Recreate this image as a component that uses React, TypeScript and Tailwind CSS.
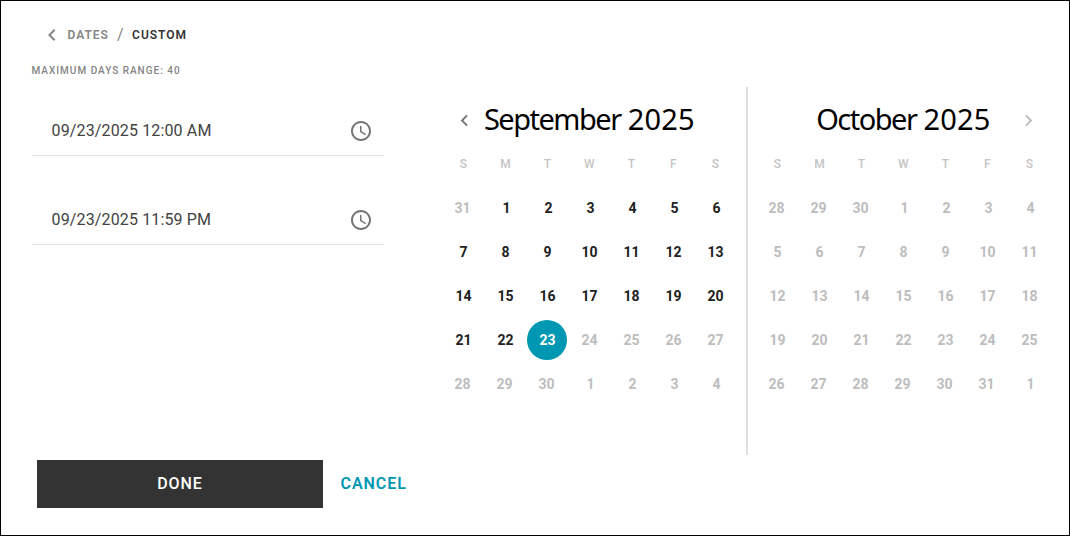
import clsx from "clsx"

const WEEKDAYS = ["S", "M", "T", "W", "T", "F", "S"]

const SEPTEMBER = [
  [31, 1, 2, 3, 4, 5, 6],
  [7, 8, 9, 10, 11, 12, 13],
  [14, 15, 16, 17, 18, 19, 20],
  [21, 22, 23, 24, 25, 26, 27],
  [28, 29, 30, 1, 2, 3, 4],
]

const OCTOBER = [
  [28, 29, 30, 1, 2, 3, 4],
  [5, 6, 7, 8, 9, 10, 11],
  [12, 13, 14, 15, 16, 17, 18],
  [19, 20, 21, 22, 23, 24, 25],
  [26, 27, 28, 29, 30, 31, 1],
]

function Chevron({ right, className }: { right?: boolean; className?: string }) {
  return (
    <svg viewBox="0 0 24 24" fill="currentColor" className={className}>
      {right ? (
        <path d="M10 6L8.59 7.41 13.17 12l-4.58 4.59L10 18l6-6z" />
      ) : (
        <path d="M15.41 7.41L14 6l-6 6 6 6 1.41-1.41L10.83 12z" />
      )}
    </svg>
  )
}

function ClockIcon() {
  return (
    <svg viewBox="0 0 24 24" fill="currentColor" className="w-6 h-6 text-[#757575]">
      <path d="M11.99 2C6.47 2 2 6.48 2 12s4.47 10 9.99 10C17.52 22 22 17.52 22 12S17.52 2 11.99 2zM12 20c-4.42 0-8-3.58-8-8s3.58-8 8-8 8 3.58 8 8-3.58 8-8 8z" />
      <path d="M12.5 7H11v6l5.25 3.15.75-1.23-4.5-2.67z" />
    </svg>
  )
}

function DateField({ value }: { value: string }) {
  return (
    <div className="flex h-[50px] w-[352px] items-center justify-between border-b border-[#e0e0e0] pl-[19.5px] pr-[11px]">
      <span className="text-base tracking-[0.14px] text-[#424242]">{value}</span>
      <button type="button" aria-label="Pick time">
        <ClockIcon />
      </button>
    </div>
  )
}

type MonthProps = {
  month: string
  year: number
  weeks: number[][]
  lastActive: number
  selected?: number
  nav: "prev" | "next"
}

function Month({ month, year, weeks, lastActive, selected, nav }: MonthProps) {
  return (
    <div className="w-[294px]">
      <div className="flex h-[66px] items-center">
        <button type="button" aria-label="Previous month" className="w-[42px] text-[#757575]">
          {nav === "prev" && <Chevron className="ml-[11px] w-[23px] h-[23px]" />}
        </button>
        <h2 className="flex-1 whitespace-nowrap pb-1 text-center font-['Noto_Sans'] text-[29px] leading-none tracking-[-1.5px] text-black">
          {month} <span className="ml-[1px] tracking-[0.2px]">{year}</span>
        </h2>
        <button type="button" aria-label="Next month" className="w-[42px] text-[#bdbdbd]">
          {nav === "next" && <Chevron right className="ml-[9px] w-[23px] h-[23px]" />}
        </button>
      </div>
      <div className="grid h-[33px] grid-cols-7">
        {WEEKDAYS.map((day, i) => (
          <span key={i} className="text-center text-xs font-medium leading-[22px] text-[#c4c4c4]">
            {day}
          </span>
        ))}
      </div>
      {weeks.map((week, row) => {
        // rows shared with a neighbouring month spread one- and two-digit days apart
        const shared = week[0] > week[6]
        return (
          <div key={row} className="grid h-11 grid-cols-7 place-items-center">
            {week.map((day, col) => {
              const outside = (row === 0 && day > 20) || (row === 4 && day < 10)
              const active = !outside && day <= lastActive
              return (
                <button
                  key={col}
                  type="button"
                  className={clsx(
                    "h-10 w-10 rounded-full text-[14px] leading-5 font-bold tracking-[-0.2px]",
                    shared && (day < 10 ? "pl-[2px]" : "pr-[2px]"),
                    day === selected ? "bg-[#0097b2] text-white" : active ? "text-[#212121]" : "text-[#bdbdbd]",
                  )}
                >
                  {day}
                </button>
              )
            })}
          </div>
        )
      })}
    </div>
  )
}

export default function App() {
  return (
    <div className="flex h-[536px] w-[1070px] flex-col border border-black bg-white font-[Roboto,sans-serif]">
      <div className="flex h-[454px]">
        <div className="w-[441.4px] pl-[30px] pt-6">
          <nav className="flex h-5 items-center pl-[9px] text-xs font-semibold tracking-[1px] text-[#858585]">
            <Chevron className="w-6 h-6" />
            <span className="ml-[3.5px]">DATES</span>
            <span className="ml-2 text-base font-normal">/</span>
            <span className="ml-[7.5px] text-[#333]">CUSTOM</span>
          </nav>
          <p className="mt-[18px] pl-[0.5px] text-[10px] leading-4 font-medium tracking-[1px] text-[#858585]">
            MAXIMUM DAYS RANGE: 40
          </p>
          <div className="mt-[27px] flex flex-col gap-[39px] pl-px">
            <DateField value="09/23/2025 12:00 AM" />
            <DateField value="09/23/2025 11:59 PM" />
          </div>
        </div>
        <div className="flex pt-[86px]">
          <div className="pr-[9.5px] border-r-2 border-[#e0e0e0]">
            <Month month="September" year={2025} weeks={SEPTEMBER} lastActive={23} selected={23} nav="prev" />
          </div>
          <div className="pl-[8.5px]">
            <Month month="October" year={2025} weeks={OCTOBER} lastActive={0} nav="next" />
          </div>
        </div>
      </div>
      <div className="flex pl-9 pt-[5px]">
        <button type="button" className="h-12 w-[286px] bg-[#333] text-base font-medium tracking-[0.9px] text-white">
          DONE
        </button>
        <button type="button" className="ml-[17.5px] text-base font-semibold tracking-[0.95px] text-[#0097b2]">
          CANCEL
        </button>
      </div>
    </div>
  )
}
